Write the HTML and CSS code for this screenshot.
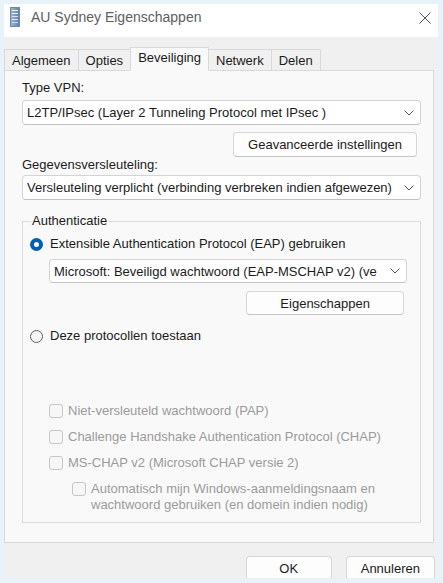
FILE: index.html
```html
<!DOCTYPE html>
<html lang="nl">
<head>
<meta charset="utf-8">
<title>AU Sydney Eigenschappen</title>
<link rel="stylesheet" href="styles.css">
</head>
<body>
<div class="window">
  <div class="titlebar">
    <svg class="app-icon" viewBox="0 0 10 20" width="10" height="20">
      <defs>
        <linearGradient id="srv" x1="0" y1="0" x2="1" y2="0">
          <stop offset="0" stop-color="#9db8d4"/>
          <stop offset="0.5" stop-color="#7d9dbf"/>
          <stop offset="1" stop-color="#5d7fa5"/>
        </linearGradient>
      </defs>
      <rect x="0.5" y="0.5" width="9" height="19" fill="url(#srv)" stroke="#6d8aab"/>
      <rect x="2" y="3" width="6" height="1" fill="#e8f0f8"/>
      <rect x="2" y="6" width="6" height="1" fill="#e8f0f8"/>
      <rect x="2" y="9" width="6" height="1" fill="#dbe6f2"/>
      <rect x="2" y="12" width="6" height="1" fill="#dbe6f2"/>
      <rect x="2" y="15" width="6" height="1" fill="#cfdcea"/>
    </svg>
    <span class="title">AU Sydney Eigenschappen</span>
    <svg class="close" viewBox="0 0 12 12" width="12" height="12">
      <path d="M0.5 0.5 L11.5 11.5 M11.5 0.5 L0.5 11.5" stroke="#555" stroke-width="1" fill="none"/>
    </svg>
  </div>

  <div class="tabs">
    <div class="tab">Algemeen</div>
    <div class="tab">Opties</div>
    <div class="tab tab-active">Beveiliging</div>
    <div class="tab">Netwerk</div>
    <div class="tab">Delen</div>
  </div>

  <div class="panel">
    <div class="label">Type VPN:</div>
    <div class="select select-top">
      <span class="select-text">L2TP/IPsec (Layer 2 Tunneling Protocol met IPsec )</span>
      <svg class="chev" viewBox="0 0 10 6" width="10" height="6"><path d="M0.5 0.5 L5 5 L9.5 0.5" stroke="#555" fill="none"/></svg>
    </div>
    <div class="btn-row btn-row-adv">
      <div class="btn btn-adv">Geavanceerde instellingen</div>
    </div>
    <div class="label">Gegevensversleuteling:</div>
    <div class="select select-enc">
      <span class="select-text">Versleuteling verplicht (verbinding verbreken indien afgewezen)</span>
      <svg class="chev" viewBox="0 0 10 6" width="10" height="6"><path d="M0.5 0.5 L5 5 L9.5 0.5" stroke="#555" fill="none"/></svg>
    </div>

    <fieldset class="group">
      <legend class="legend">Authenticatie</legend>
      <div class="radio-row radio-row-first">
        <span class="radio radio-on"></span>
        <span>Extensible Authentication Protocol (EAP) gebruiken</span>
      </div>
      <div class="select select-eap">
        <span class="select-text">Microsoft: Beveiligd wachtwoord (EAP-MSCHAP v2) (ve</span>
        <svg class="chev" viewBox="0 0 10 6" width="10" height="6"><path d="M0.5 0.5 L5 5 L9.5 0.5" stroke="#555" fill="none"/></svg>
      </div>
      <div class="btn-row btn-row-props">
        <div class="btn btn-props">Eigenschappen</div>
      </div>
      <div class="radio-row radio-row-second">
        <span class="radio"></span>
        <span>Deze protocollen toestaan</span>
      </div>

      <div class="check-row check-first">
        <span class="check"></span>
        <span>Niet-versleuteld wachtwoord (PAP)</span>
      </div>
      <div class="check-row">
        <span class="check"></span>
        <span>Challenge Handshake Authentication Protocol (CHAP)</span>
      </div>
      <div class="check-row">
        <span class="check"></span>
        <span>MS-CHAP v2 (Microsoft CHAP versie 2)</span>
      </div>
      <div class="check-row check-sub">
        <span class="check"></span>
        <span>Automatisch mijn Windows-aanmeldingsnaam en<br>wachtwoord gebruiken (en domein indien nodig)</span>
      </div>
    </fieldset>
  </div>

  <div class="footer">
    <div class="btn btn-dialog">OK</div>
    <div class="btn btn-dialog">Annuleren</div>
  </div>
</div>
</body>
</html>
```

FILE: styles.css
```css
* {
  box-sizing: border-box;
}

html,
body {
  margin: 0;
}

body {
  height: 583px;
  overflow: hidden;
  background: #e8f3f9;
  padding: 4px 5px 0 4px;
  font-family: "Liberation Sans", Arial, sans-serif;
  font-size: 13px;
  color: #1b1b1b;
}

.window {
  width: 434px;
  height: 574px;
  overflow: hidden;
  background: #f0f0f0;
  display: flex;
  flex-direction: column;
}

/* Title bar */
.titlebar {
  flex: none;
  height: 33px;
  background: #ffffff;
  display: flex;
  align-items: flex-start;
  padding: 3px 7px 0 6px;
}

.app-icon {
  flex: none;
  display: block;
}

.title {
  margin-left: 11px;
  font-size: 14px;
  line-height: 20px;
  color: #5e5e5e;
}

.close {
  flex: none;
  display: block;
  margin-left: auto;
  margin-top: 5px;
}

/* Tabs */
.tabs {
  flex: none;
  height: 34px;
  margin-bottom: -1px;
  display: flex;
  align-items: flex-end;
  position: relative;
  z-index: 1;
}

.tab {
  height: 22px;
  padding: 0 7px;
  margin-right: -1px;
  border: 1px solid #d9d9d9;
  background: #f0f0f0;
  line-height: 21px;
  white-space: nowrap;
}

.tab-active {
  height: 24px;
  background: #f9f9f9;
  border-bottom-color: #f9f9f9;
  line-height: 20px;
  position: relative;
  z-index: 1;
}

/* Panel */
.panel {
  flex: 1;
  margin-right: 4px;
  background: #f9f9f9;
  border: 1px solid #d9d9d9;
  padding: 9px 12px 0 17px;
  display: flex;
  flex-direction: column;
}

.label {
  line-height: 16px;
}

.select {
  display: flex;
  align-items: center;
  height: 25px;
  background: #ffffff;
  border: 1px solid #d4d4d4;
  border-bottom-color: #c2c2c2;
  border-radius: 4px;
  padding: 0 6px 0 4px;
}

.select-text {
  flex: 1;
  min-width: 0;
  overflow: hidden;
  white-space: nowrap;
}

.chev {
  flex: none;
  display: block;
  margin-left: 4px;
}

.select-top {
  margin-top: 4px;
}

.select-enc {
  margin-top: 2px;
}

.btn-row {
  display: flex;
  justify-content: flex-end;
}

.btn {
  height: 25px;
  display: flex;
  align-items: center;
  justify-content: center;
  background: #fdfdfd;
  border: 1px solid #d6d6d6;
  border-bottom-color: #c4c4c4;
  border-radius: 4px;
  white-space: nowrap;
}

.btn-row-adv {
  margin-top: 7px;
  padding-right: 4px;
}

.btn-adv {
  padding: 0 14px;
}

/* Group box */
.group {
  margin: 13px 0 0 0;
  padding: 0 0 9px 0;
  border: 1px solid #dcdcdc;
  min-width: 0;
}

.legend {
  margin-left: 8px;
  padding: 0 1px;
  line-height: 16px;
}

.radio-row {
  display: flex;
  align-items: center;
  gap: 7px;
  padding-left: 7px;
  line-height: 16px;
}

.radio-row-first {
  margin-top: 7px;
}

.radio-row-second {
  margin-top: 13px;
}

.radio {
  flex: none;
  width: 13px;
  height: 13px;
  border-radius: 50%;
  border: 1px solid #5f5f5f;
  background: #f6f6f6;
}

.radio-on {
  border: 4px solid #005fb8;
  background: #ffffff;
}

.select-eap {
  height: 24px;
  margin: 7px 13px 0 26px;
}

.btn-row-props {
  margin-top: 8px;
  padding-right: 16px;
}

.btn-props {
  height: 24px;
  padding: 0 33px;
}

.check-row {
  display: flex;
  align-items: flex-start;
  gap: 5px;
  padding-left: 26px;
  margin-top: 10px;
  line-height: 16px;
  color: #9b9b9b;
}

.check-first {
  margin-top: 59px;
}

.check-sub {
  padding-left: 49px;
}

.check {
  flex: none;
  width: 14px;
  height: 14px;
  margin-top: 1px;
  border: 1px solid #c6c6c6;
  border-radius: 3px;
  background: #f6f6f6;
}

/* Footer */
.footer {
  flex: none;
  height: 35px;
  display: flex;
  justify-content: flex-end;
  gap: 14px;
  padding: 13px 3px 0 0;
}

.btn-dialog {
  height: 24px;
  min-width: 86px;
  padding: 0 14px;
}
```
